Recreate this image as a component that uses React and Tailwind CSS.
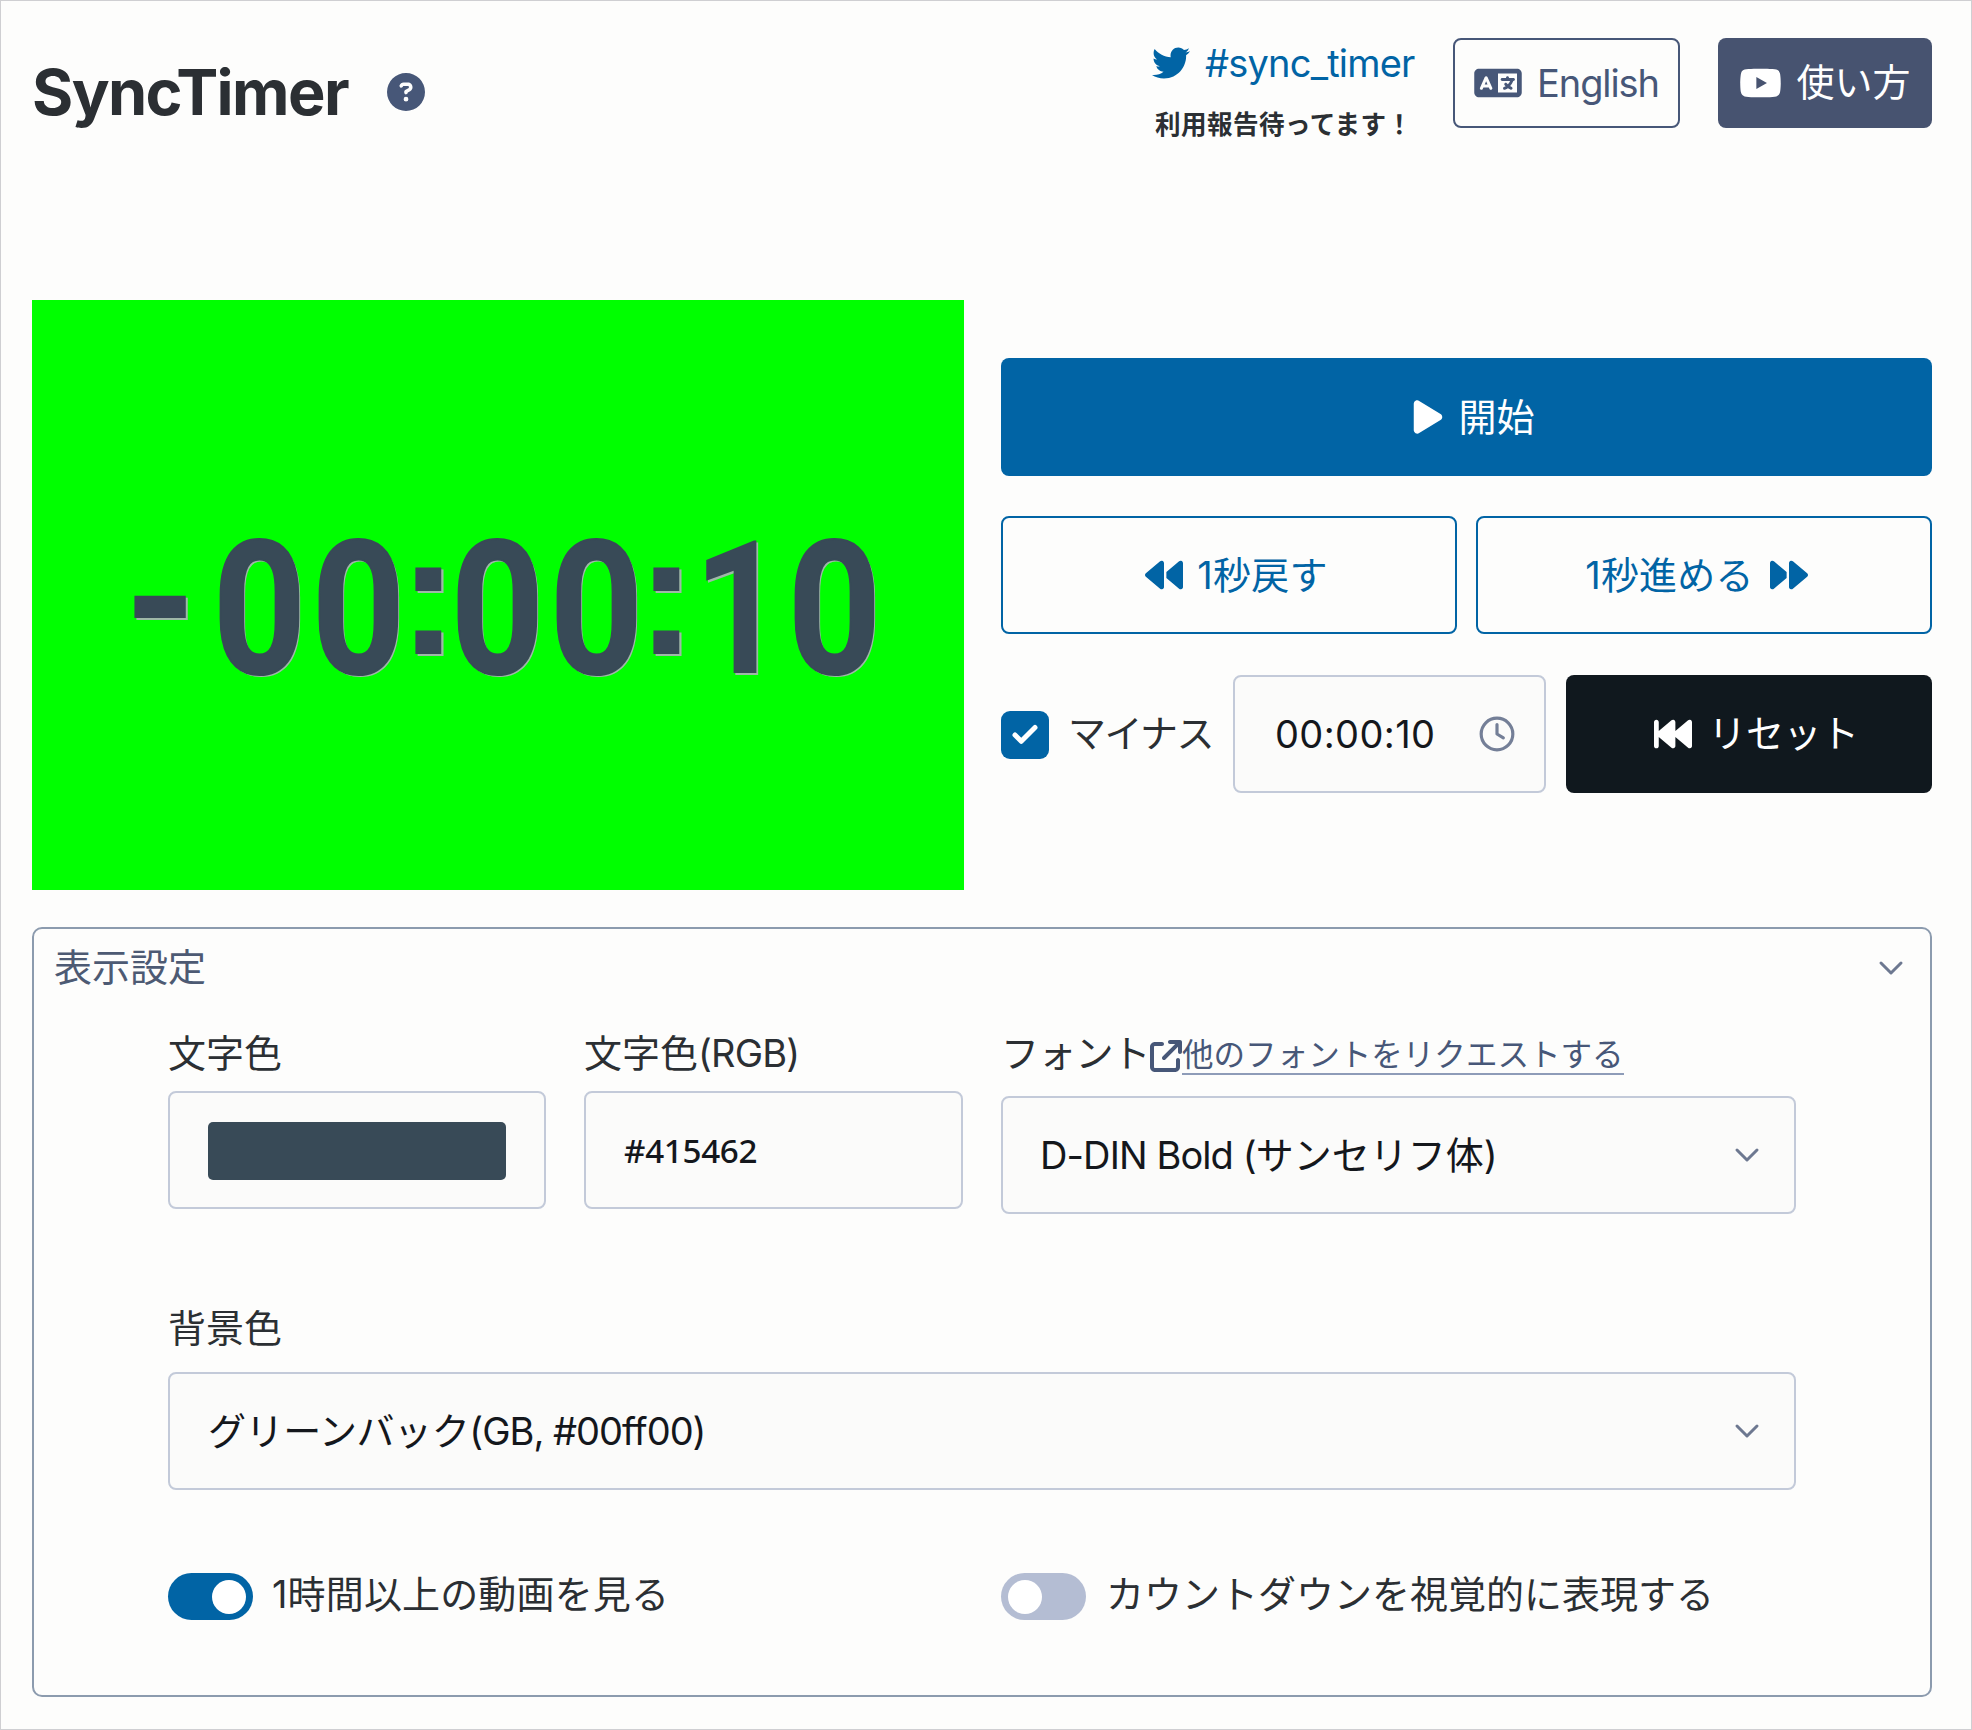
import { FaTwitter, FaLanguage, FaYoutube, FaPlay, FaBackward, FaForward, FaBackwardFast, FaCircleQuestion, FaArrowUpRightFromSquare } from "react-icons/fa6";

const boxClass = "flex h-[118px] items-center rounded-[8px] border-2 border-[#c3cad9] bg-[#fbfbfa] pl-[38px] text-[#14171c]";

function Chevron() {
  return (
    <svg width="26" height="16" viewBox="0 0 26 16" fill="none" stroke="#6d7890" strokeWidth="3" strokeLinecap="round" strokeLinejoin="round">
      <path d="M3 3l10 10L23 3" />
    </svg>
  );
}

function Clock() {
  return (
    <svg width="38" height="38" viewBox="0 0 24 24" fill="none" stroke="#747f97" strokeWidth="2" strokeLinecap="round" strokeLinejoin="round">
      <circle cx="12" cy="12" r="10" />
      <path d="M12 6v6l4 2.500" />
    </svg>
  );
}

function Switch({ on }) {
  return (
    <span className={on ? "flex h-[47px] w-[85px] items-center justify-end rounded-full bg-[#0164a5] px-[7px]" : "flex h-[47px] w-[85px] items-center rounded-full bg-[#b4bdd3] px-[7px]"}>
      <span className="size-[34px] rounded-full bg-white" />
    </span>
  );
}

function Cell({ c }) {
  if (c === ":")
    return (
      <span className="flex w-[40px] -translate-y-[14px] justify-center font-['Liberation_Sans'] text-[170px] leading-[190px]">
        <span className="scale-x-[1.080]">:</span>
      </span>
    );
  if (c === "-")
    return <span className="flex w-[83px] -translate-x-[3px] -translate-y-[10px] justify-start"><span className="origin-left scale-y-[1.080]">-</span></span>;
  if (c === "1")
    return <span className="flex w-[99px] translate-x-[4px] justify-center"><span className="scale-x-[0.870]">1</span></span>;
  return <span className="flex w-[99px] justify-center"><span className="scale-x-[0.870] [-webkit-text-stroke:2px_#384a57]">{c}</span></span>;
}

export default function App() {
  return (
    <div className="flex h-[1730px] w-[1972px] flex-col border border-[#cfcfd2] bg-[#fdfdfc] pr-[39px] pl-[31px] font-['Inter','Noto_Sans_CJK_JP',sans-serif] text-[38px] leading-[57px] text-[#2b2f33]">
      <header className="flex h-[299px] items-start justify-between">
        <div className="flex items-center gap-[39px] pt-[52px]">
          <h1 className="translate-y-px text-[63px] leading-[77px] font-bold tracking-[-1.6px]">SyncTimer</h1>
          <FaCircleQuestion className="size-[38px] text-[#475778]" />
        </div>
        <div className="flex items-start pt-[37px]">
          <div className="mr-[38px] flex w-[263px] flex-col">
            <div className="-mt-[3px] flex items-center text-[#0164a5]">
              <FaTwitter className="mr-[15px] size-[38px] -translate-y-px" />
              <span className="tracking-[-0.8px]">#sync_timer</span>
            </div>
            <div className="mt-[14px] pl-[3px] text-[25.600px] leading-[38px] font-bold tracking-[0.400px] whitespace-nowrap">利用報告待ってます！</div>
          </div>
          <button className="flex h-[90px] w-[227px] items-center justify-center gap-[15px] rounded-[8px] border-2 border-[#475778] text-[#475778]">
            <FaLanguage className="h-[38px] w-[48px]" />
            <span className="tracking-[-1.1px]">English</span>
          </button>
          <button className="ml-[38px] flex h-[90px] w-[214px] items-center justify-center gap-[14px] rounded-[8px] bg-[#475370] text-white">
            <FaYoutube className="h-[38px] w-[43px]" />
            <span className="-translate-y-px">使い方</span>
          </button>
        </div>
      </header>

      <section className="flex items-start justify-between">
        <div className="flex h-[590px] w-[932px] items-center bg-[#00ff00] pt-[28px] pl-[95px] font-['Roboto'] text-[186px] leading-[190px] font-bold text-[#384a57] [text-shadow:2px_2px_0_#9fb8a8]">
          {"-00:00:10".split("").map((c, i) => <Cell key={i} c={c} />)}
        </div>
        <div className="flex w-[931px] flex-col gap-[40px] pt-[58px]">
          <button className="flex h-[118px] items-center justify-center gap-[14px] rounded-[8px] bg-[#0164a5] pl-[14px] text-white">
            <FaPlay className="h-[38px] w-[32px]" />
            <span>開始</span>
          </button>
          <div className="grid grid-cols-2 gap-[19px] text-[#0164a5]">
            <button className="flex h-[118px] items-center justify-center gap-[14px] rounded-[8px] border-2 border-[#0164a5] pl-[15px]">
              <FaBackward className="size-[38px]" />
              <span className="tracking-[0.300px]">1秒戻す</span>
            </button>
            <button className="flex h-[118px] items-center justify-center gap-[16px] rounded-[8px] border-2 border-[#0164a5] pr-[15px]">
              <span className="tracking-[0.200px]">1秒進める</span>
              <FaForward className="size-[38px]" />
            </button>
          </div>
          <div className="mt-px flex items-center">
            <span className="flex size-[48px] translate-y-px items-center justify-center rounded-[9px] bg-[#0164a5]">
              <svg width="30" height="30" viewBox="0 0 24 24" fill="none" stroke="white" strokeWidth="4" strokeLinecap="round" strokeLinejoin="round"><path d="M20 6 9 17l-5-5" /></svg>
            </span>
            <span className="ml-[19px] w-[165px] -translate-y-px tracking-[-1.600px] whitespace-nowrap">マイナス</span>
            <div className="flex h-[118px] w-[313px] items-center justify-between rounded-[8px] border-2 border-[#c3cad9] bg-[#fbfbfa] pr-[28px] pl-[40px] text-[#14171c]">
              <span className="tracking-[0.400px]">00:00:10</span>
              <Clock />
            </div>
            <button className="ml-[20px] flex h-[118px] w-[366px] items-center justify-center gap-[16px] rounded-[8px] bg-[#10181e] pl-[15px] text-white">
              <FaBackwardFast className="size-[38px]" />
              <span className="-translate-y-px tracking-[-0.400px]">リセット</span>
            </button>
          </div>
        </div>
      </section>

      <section className="mt-[37px] h-[770px] w-[1900px] rounded-[10px] border-2 border-[#8c9bae]">
        <div className="flex h-[80px] items-center justify-between pr-[26px] pb-[2px] pl-[20px] text-[#4d5a73]">
          <span className="-translate-y-px">表示設定</span>
          <Chevron />
        </div>
        <div className="flex gap-[38px] pl-[134px]">
          <div className="w-[378px] pt-[16px]">
            <div className="mb-[9px]">文字色</div>
            <div className={boxClass + " pr-[38px]"}><span className="h-[58px] w-full translate-y-px rounded-[5px] bg-[#384a57]" /></div>
          </div>
          <div className="w-[379px] pt-[16px]">
            <div className="mb-[9px]"><span>文字色</span><span className="tracking-[-0.800px]">(RGB)</span></div>
            <div className={boxClass}><span className="font-['Noto_Sans'] text-[33.200px] font-medium tracking-[-0.300px]">#415462</span></div>
          </div>
          <div className="w-[795px] pt-[16px]">
            <div className="mb-[14px] flex items-center whitespace-nowrap">
              <span className="w-[149px] tracking-[-0.800px]">フォント</span>
              <FaArrowUpRightFromSquare className="size-[32px] translate-y-[2px] text-[#475778]" />
              <span className="translate-y-[2px] border-b-2 border-[#8e9cb8] text-[31.550px] leading-[36px] text-[#475778]">他のフォントをリクエストする</span>
            </div>
            <div className={boxClass + " justify-between pr-[34px]"}>
              <span className="-translate-x-px"><span className="tracking-[-0.900px]">D-DIN Bold (</span>サンセリフ体)</span>
              <Chevron />
            </div>
          </div>
        </div>
        <div className="mt-[86px] w-[1762px] pl-[134px]">
          <div className="mb-[15px]">背景色</div>
          <div className={boxClass + " justify-between pr-[34px]"}>
            <span><span className="tracking-[-0.400px]">グリーンバック</span><span className="tracking-[-1px]">(GB, #00ff00)</span></span>
            <Chevron />
          </div>
        </div>
        <div className="mt-[78px] flex pl-[134px]">
          <div className="flex w-[833px] items-center gap-[19px]"><Switch on /><span className="-translate-y-[2px] tracking-[0.150px]">1時間以上の動画を見る</span></div>
          <div className="flex items-center gap-[20px]"><Switch /><span className="-translate-y-[2px]">カウントダウンを視覚的に表現する</span></div>
        </div>
      </section>
    </div>
  );
}
